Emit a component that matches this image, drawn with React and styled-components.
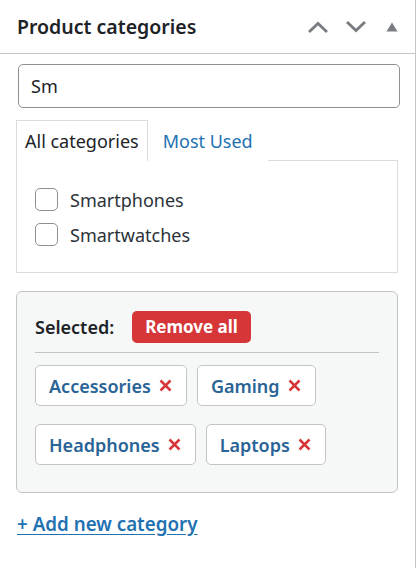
import React from "react";
import styled, { createGlobalStyle } from "styled-components";

const Global = createGlobalStyle`
  html, body { margin: 0; padding: 0; background: #fff; }
  body { font-family: "Noto Sans", "Open Sans", sans-serif; color: #1d2327; }
  * { box-sizing: border-box; }
`;

const Panel = styled.div`
  width: 416px;
  min-height: 568px;
  border-right: 1px solid #c3c4c7;
  background: #fff;
`;

const Header = styled.div`
  height: 54px;
  display: flex;
  align-items: center;
  justify-content: space-between;
  padding: 0 6px 0 17px;
  border-bottom: 1px solid #c3c4c7;
`;

const Title = styled.h2`
  margin: 0;
  font-size: 19.5px;
  font-weight: 600;
  color: #1d2327;
`;

const Controls = styled.div`
  display: flex;
  align-items: center;
`;

const IconBtn = styled.button`
  width: ${(p) => p.$w || 38}px;
  height: 40px;
  border: 0;
  background: none;
  padding: 0;
  display: flex;
  align-items: center;
  justify-content: center;
  color: #787c82;
`;

const Body = styled.div`
  padding: 10px 17px 0 16px;
`;

const Search = styled.input`
  display: block;
  margin-left: 2px;
  width: 382px;
  height: 44px;
  border: 1px solid #8c8f94;
  border-radius: 5px;
  padding: 0 12px;
  font-family: inherit;
  font-size: 18px;
  color: #1d2327;
  outline: none;
`;

const Tabs = styled.div`
  display: flex;
  margin-top: 12px;
`;

const Tab = styled.div`
  height: 41px;
  padding: 0 ${(p) => (p.$active ? "8px" : "14px")};
  display: flex;
  align-items: center;
  font-size: 18px;
  color: ${(p) => (p.$active ? "#1d2327" : "#2271b1")};
  border: 1px solid ${(p) => (p.$active ? "#dcdcde" : "transparent")};
  border-bottom: 0;
  background: #fff;
  margin-bottom: -1px;
  position: relative;
  z-index: 1;
`;

const TabPanel = styled.div`
  border: 1px solid #dcdcde;
  width: 382px;
  padding: 27px 18px 26px;
  display: flex;
  flex-direction: column;
  gap: 12px;
`;

const CheckRow = styled.label`
  display: flex;
  align-items: center;
  gap: 12px;
  font-size: 18px;
  color: #2c3338;
  height: 23px;
`;

const Box = styled.span`
  width: 23px;
  height: 23px;
  border: 1px solid #8c8f94;
  border-radius: 5px;
  background: #fff;
  flex: none;
`;

const SelectedBox = styled.div`
  margin-top: 18px;
  width: 382px;
  background: #f6f7f7;
  border: 1px solid #c3c4c7;
  border-radius: 6px;
  padding: 18px 18px 27px;
`;

const SelectedHead = styled.div`
  display: flex;
  align-items: center;
  gap: 18px;
  height: 33px;
`;

const SelLabel = styled.span`
  font-size: 18px;
  font-weight: 600;
  color: #1d2327;
`;

const RemoveAll = styled.button`
  height: 32px;
  padding: 0 13px;
  border: 0;
  border-radius: 5px;
  background: #d63638;
  color: #fff;
  font-family: inherit;
  font-size: 17px;
  font-weight: 700;
`;

const Divider = styled.hr`
  border: 0;
  border-top: 1px solid #c3c4c7;
  margin: 9px 0 12px;
`;

const Chips = styled.div`
  display: flex;
  flex-wrap: wrap;
  column-gap: 10px;
  row-gap: 18px;
  width: 300px;
`;

const Chip = styled.span`
  height: 41px;
  display: inline-flex;
  align-items: center;
  gap: 8px;
  padding: 0 14px 0 13px;
  background: #fff;
  border: 1px solid #c3c4c7;
  border-radius: 5px;
  font-size: 18px;
  font-weight: 600;
  color: #2a6496;
`;

const X = () => (
  <svg width="13" height="13" viewBox="0 0 13 13">
    <path d="M1.5 1.5 L11.5 11.5 M11.5 1.5 L1.5 11.5" stroke="#d63638" strokeWidth="2.5" />
  </svg>
);

const AddLink = styled.a`
  display: inline-block;
  margin: 18px 0 0 1px;
  font-size: 18.8px;
  font-weight: 600;
  color: #2271b1;
  text-decoration: underline;
  text-underline-offset: 3px;
`;

export default function App() {
  const chips = ["Accessories", "Gaming", "Headphones", "Laptops"];
  return (
    <>
      <Global />
      <Panel>
        <Header>
          <Title>Product categories</Title>
          <Controls>
            <IconBtn aria-label="Move up">
              <svg width="22" height="14" viewBox="0 0 22 14">
                <path d="M2 12 L11 3.5 L20 12" fill="none" stroke="currentColor" strokeWidth="2.8" />
              </svg>
            </IconBtn>
            <IconBtn aria-label="Move down">
              <svg width="22" height="14" viewBox="0 0 22 14">
                <path d="M2 2 L11 10.5 L20 2" fill="none" stroke="currentColor" strokeWidth="2.8" />
              </svg>
            </IconBtn>
            <IconBtn aria-label="Toggle" $w={34}>
              <svg width="12" height="10" viewBox="0 0 12 10">
                <path d="M6 0.5 L11.5 9.5 L0.5 9.5 Z" fill="currentColor" />
              </svg>
            </IconBtn>
          </Controls>
        </Header>
        <Body>
          <Search defaultValue="Sm" />
          <Tabs>
            <Tab $active>All categories</Tab>
            <Tab>Most Used</Tab>
          </Tabs>
          <TabPanel>
            <CheckRow><Box />Smartphones</CheckRow>
            <CheckRow><Box />Smartwatches</CheckRow>
          </TabPanel>
          <SelectedBox>
            <SelectedHead>
              <SelLabel>Selected:</SelLabel>
              <RemoveAll>Remove all</RemoveAll>
            </SelectedHead>
            <Divider />
            <Chips>
              {chips.map((c) => (
                <Chip key={c}>{c}<X /></Chip>
              ))}
            </Chips>
          </SelectedBox>
          <AddLink href="#">+ Add new category</AddLink>
        </Body>
      </Panel>
    </>
  );
}
